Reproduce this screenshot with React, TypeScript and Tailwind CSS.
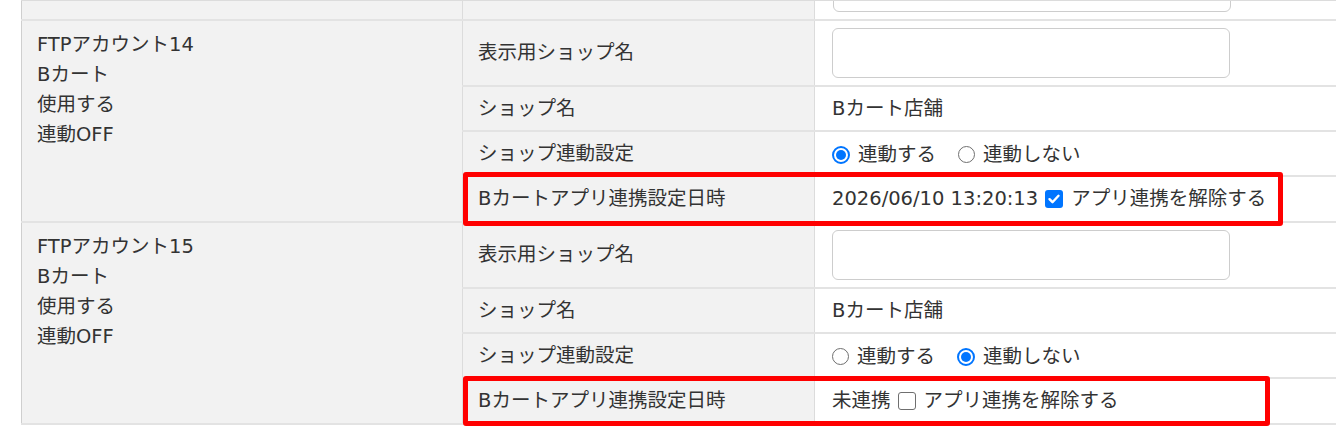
import React from 'react';

type Block = {
  account: string;
  linked: boolean;
  date?: string;
};

const blocks: Block[] = [
  { account: 'FTPアカウント14', linked: true, date: '2026/06/10 13:20:13' },
  { account: 'FTPアカウント15', linked: false },
];

const Label: React.FC<{ children: React.ReactNode }> = ({ children }) => (
  <div className="w-[352px] shrink-0 bg-[#f2f2f2] border-l border-[#dcdcdc] pl-[15px] flex items-center">
    {children}
  </div>
);

const Value: React.FC<{ children?: React.ReactNode }> = ({ children }) => (
  <div className="flex-1 bg-white border-l border-[#dcdcdc] pl-[17px] flex items-center">{children}</div>
);

// native controls render too small here, so they are drawn by hand
const RadioMark: React.FC<{ checked: boolean }> = ({ checked }) =>
  checked ? (
    <span className="w-[18px] h-[18px] rounded-full border-2 border-[#0075ff] flex items-center justify-center shrink-0">
      <span className="w-[10px] h-[10px] rounded-full bg-[#0075ff]" />
    </span>
  ) : (
    <span className="w-[17px] h-[17px] rounded-full border-[1.5px] border-[#6f6f6f] bg-white shrink-0" />
  );

const CheckMark: React.FC<{ checked: boolean }> = ({ checked }) =>
  checked ? (
    <span className="w-[18px] h-[18px] rounded-[3px] bg-[#0075ff] flex items-center justify-center shrink-0">
      <svg width="14" height="14" viewBox="0 0 14 14">
        <path d="M2.5 7.2l3 3 6-6.4" fill="none" stroke="#ffffff" strokeWidth="2.4" strokeLinecap="round" strokeLinejoin="round" />
      </svg>
    </span>
  ) : (
    <span className="w-[18px] h-[18px] rounded-[3px] border-[1.5px] border-[#6f6f6f] bg-white shrink-0" />
  );

const Radio: React.FC<{ checked: boolean; label: string }> = ({ checked, label }) => (
  <label className="flex items-center gap-[8px]">
    <RadioMark checked={checked} />
    <span>{label}</span>
  </label>
);

const AccountBlock: React.FC<{ block: Block }> = ({ block }) => (
  <div className="flex border-t-2 border-[#e3e3e3]">
    <div className="w-[441px] shrink-0 bg-[#f2f2f2] border-l border-[#cfcfcf] pl-[15px] pt-[9px]">
      <div>{block.account}</div>
      <div>Bカート</div>
      <div>使用する</div>
      <div>連動OFF</div>
    </div>
    <div className="flex-1 flex flex-col">
      <div className="flex h-[66px] border-b-2 border-[#e3e3e3]">
        <Label>表示用ショップ名</Label>
        <Value>
          <input type="text" className="w-[398px] h-[50px] rounded-[6px] border border-[#cdcdcd] bg-white" />
        </Value>
      </div>
      <div className="flex h-[45px] border-b-2 border-[#e3e3e3]">
        <Label>ショップ名</Label>
        <Value>Bカート店舗</Value>
      </div>
      <div className="flex h-[45px] border-b-2 border-[#e3e3e3]">
        <Label>ショップ連動設定</Label>
        <Value>
          <div className="flex items-center gap-[22px] pt-[2px]">
            <Radio checked={block.linked} label="連動する" />
            <Radio checked={!block.linked} label="連動しない" />
          </div>
        </Value>
      </div>
      <div className="flex h-[44px]">
        <Label>Bカートアプリ連携設定日時</Label>
        <Value>
          <div className="flex items-center gap-[7px]">
            <span>{block.linked ? block.date : '未連携'}</span>
            <label className="flex items-center gap-[8px]">
              <CheckMark checked={block.linked} />
              <span>アプリ連携を解除する</span>
            </label>
          </div>
        </Value>
      </div>
    </div>
  </div>
);

export default function App() {
  return (
    <div
      className="w-[1336px] h-[438px] overflow-hidden bg-white text-[#333333] text-[19.5px] leading-[30px]"
      style={{ fontFamily: '"DejaVu Sans", "Noto Sans CJK JP", sans-serif' }}
    >
      <div className="relative ml-[21px] border-t border-[#dcdcdc]">
        {/* tail of the previous row */}
        <div className="flex h-[18px]">
          <div className="w-[441px] shrink-0 bg-[#f2f2f2] border-l border-[#cfcfcf]" />
          <div className="w-[352px] shrink-0 bg-[#f2f2f2] border-l border-[#dcdcdc]" />
          <div className="flex-1 bg-white border-l border-[#dcdcdc] pl-[18px] flex items-end pb-[7px] overflow-hidden">
            <div className="w-[398px] h-[50px] shrink-0 rounded-[6px] border border-[#cdcdcd]" />
          </div>
        </div>

        {blocks.map((b) => (
          <AccountBlock key={b.account} block={b} />
        ))}
        <div className="border-t-2 border-[#e3e3e3]" />

        {/* highlight boxes */}
        <div className="absolute left-[442px] top-[171px] w-[820px] h-[54px] border-[5px] border-[#ff0000] rounded-[3px]" />
        <div className="absolute left-[442px] top-[375px] w-[807px] h-[50px] border-[5px] border-[#ff0000] rounded-[3px]" />
      </div>
    </div>
  );
}
